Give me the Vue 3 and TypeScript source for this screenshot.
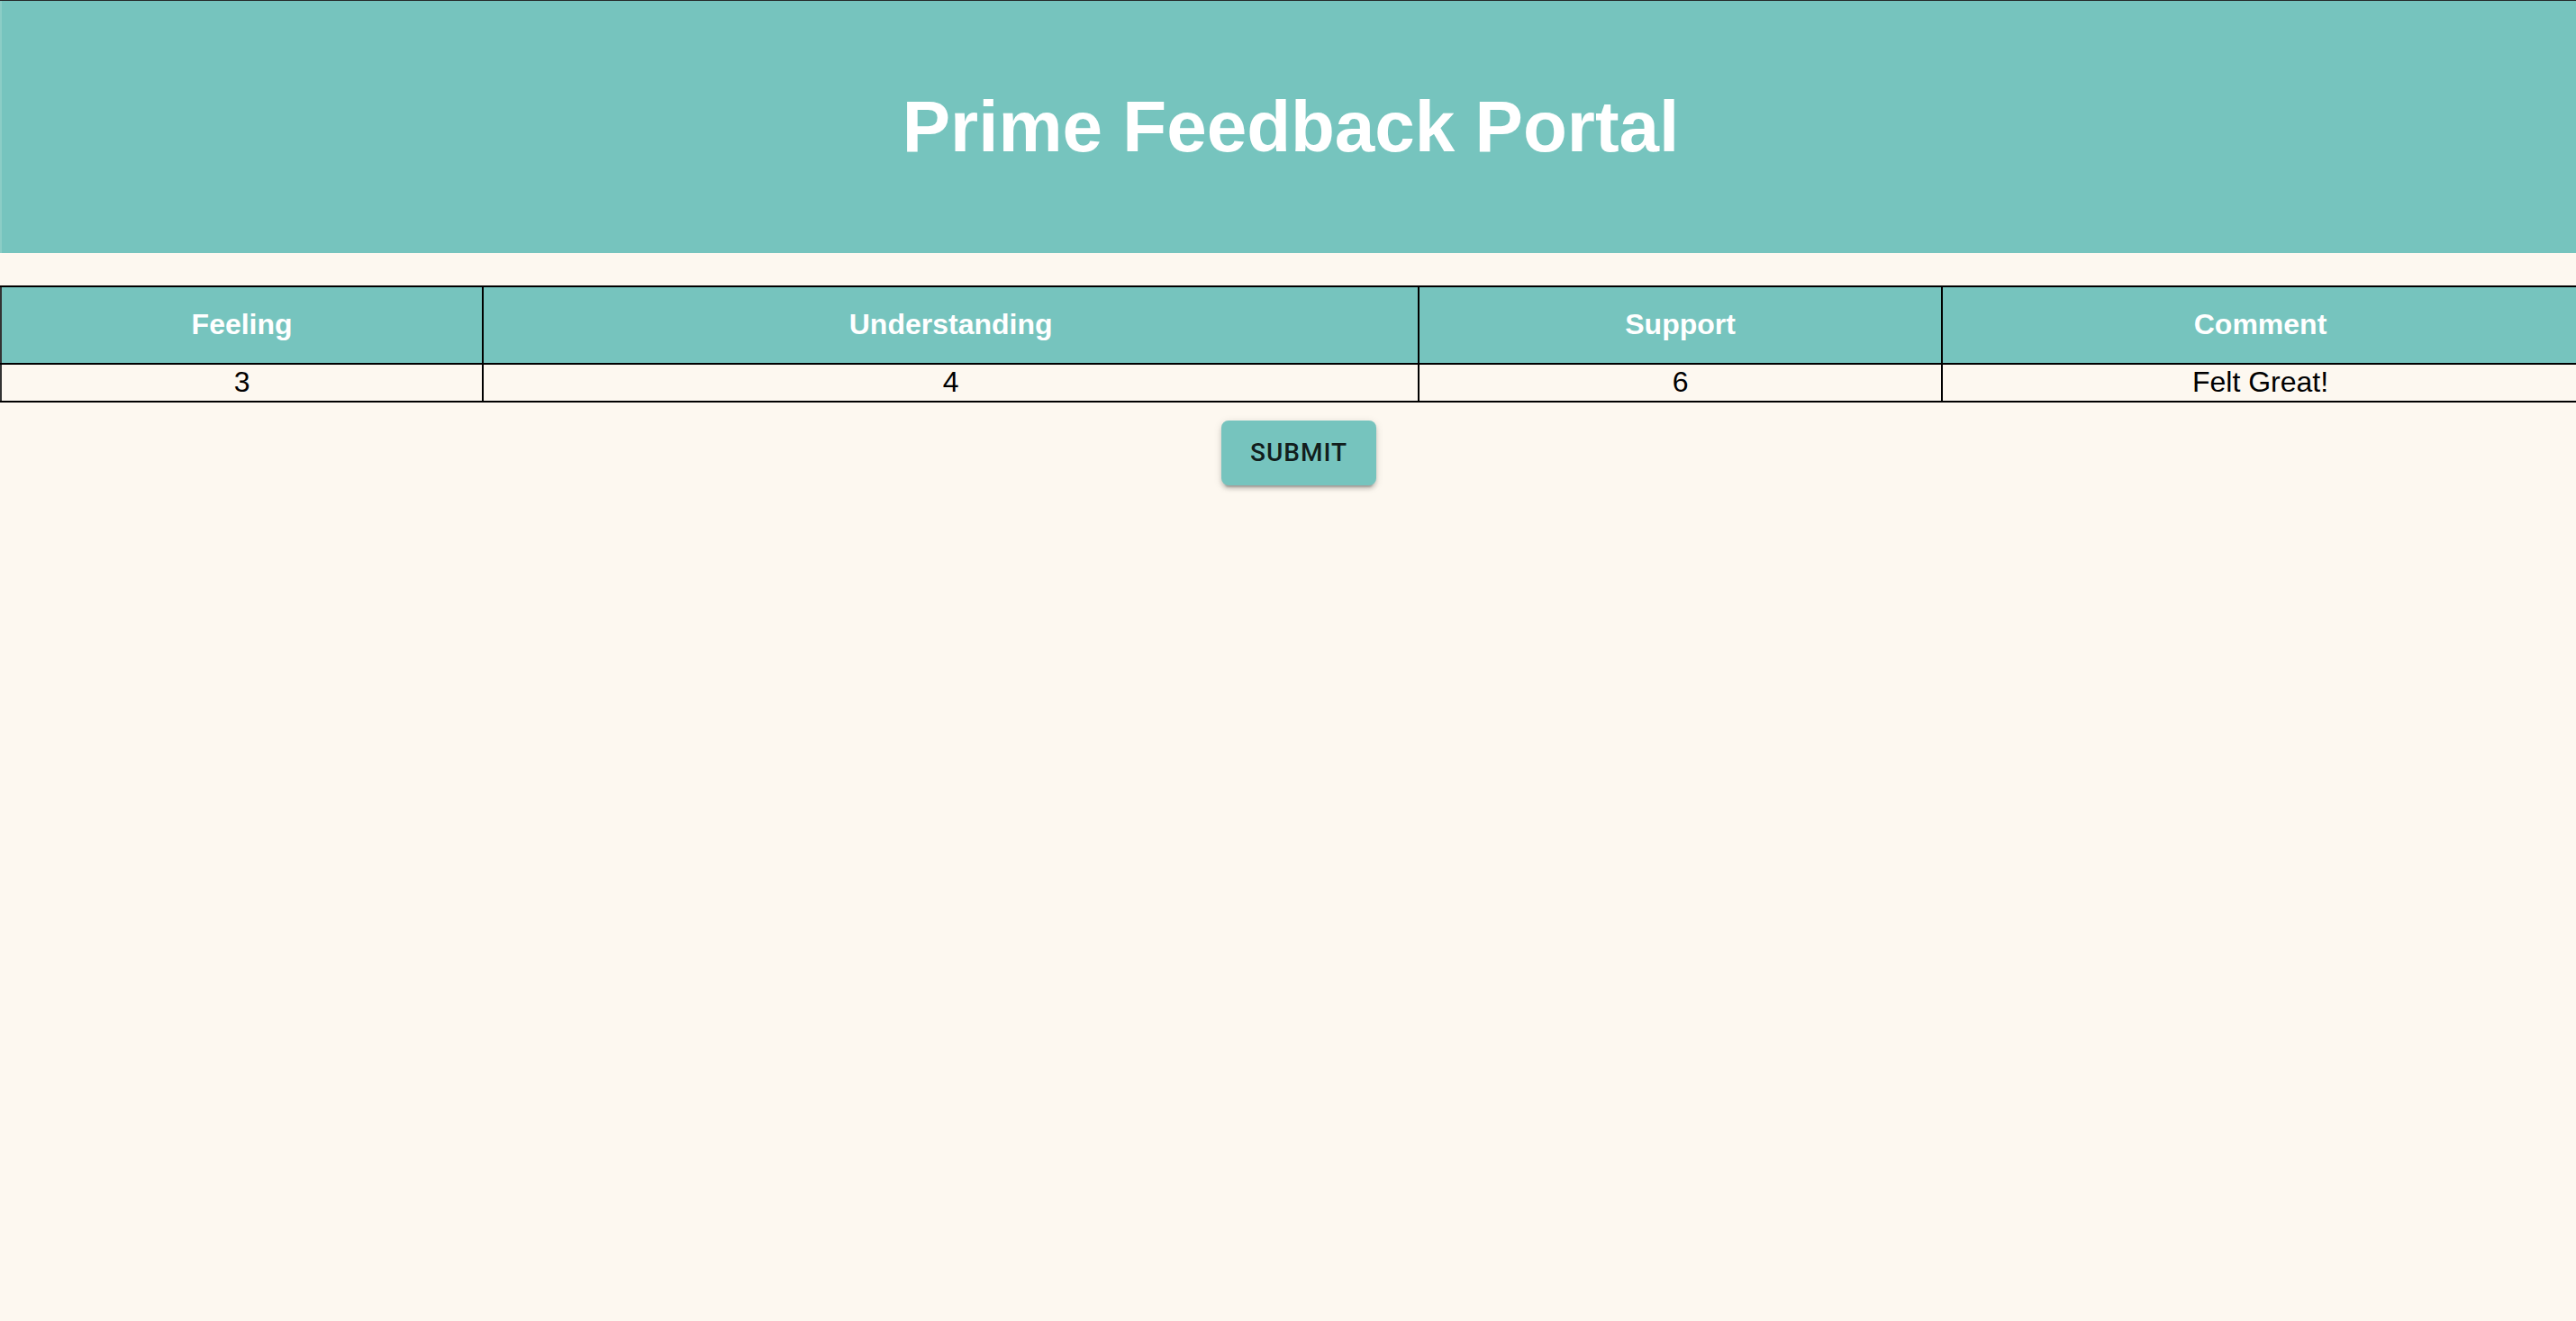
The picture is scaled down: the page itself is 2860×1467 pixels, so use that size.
<script setup lang="ts">
interface Feedback {
  id: number
  feeling: number
  understanding: number
  support: number
  comment: string
}

const feedback: Feedback[] = [
  { id: 1, feeling: 3, understanding: 4, support: 6, comment: 'Felt Great!' },
]
</script>

<template>
  <div class="app">
    <div class="page">
      <header class="banner">
        <h1>Prime Feedback Portal</h1>
      </header>
      <main>
        <table class="review">
          <colgroup>
            <col class="col-feeling" />
            <col class="col-understanding" />
            <col class="col-support" />
            <col class="col-comment" />
          </colgroup>
          <thead>
            <tr>
              <th scope="col">Feeling</th>
              <th scope="col">Understanding</th>
              <th scope="col">Support</th>
              <th scope="col">Comment</th>
            </tr>
          </thead>
          <tbody>
            <tr v-for="row in feedback" :key="row.id">
              <td>{{ row.feeling }}</td>
              <td>{{ row.understanding }}</td>
              <td>{{ row.support }}</td>
              <td>{{ row.comment }}</td>
            </tr>
          </tbody>
        </table>
        <div class="actions">
          <button type="button" class="submit">SUBMIT</button>
        </div>
      </main>
    </div>
  </div>
</template>

<style>
body {
  background: #fdf8f0;
}
</style>

<style scoped>
.app {
  overflow-x: hidden;
  border-top: 1px solid #262a2b;
  font-family: "Liberation Sans", Arial, Helvetica, sans-serif;
  font-size: 32px;
  line-height: 36px;
  color: #000;
}

/* The page runs slightly past the right edge of the window. */
.page {
  margin-right: -4px;
  padding-bottom: 20px;
}

.banner {
  padding: 94px 0;
  border-left: 2px solid #8ccdc6;
  background: #76c4be;
  color: #fff;
  text-align: center;
}

h1 {
  margin: 0;
  font-size: 80px;
  line-height: 92px;
}

.review {
  width: 100%;
  margin-top: 36px;
  border-collapse: collapse;
  table-layout: fixed;
  text-align: center;
}

.col-feeling {
  width: 18.7%;
}

.col-understanding {
  width: 36.3%;
}

.col-support {
  width: 20.3%;
}

.col-comment {
  width: 24.7%;
}

th,
td {
  border: 2px solid #000;
  padding: 1px 2px 3px;
}

th {
  padding: 23px 2px 25px;
  background: #76c4be;
  color: #fff;
}

th:first-child,
td:first-child {
  border-left-color: #333;
}

.actions {
  display: flex;
  justify-content: center;
  padding: 20px 0 0 20px;
}

.submit {
  padding: 12px 32px;
  border: 0;
  border-radius: 8px;
  background: #76c4be;
  color: rgba(0, 0, 0, 0.87);
  font-family: Roboto, "Liberation Sans", sans-serif;
  font-size: 28px;
  font-weight: 500;
  line-height: 48px;
  letter-spacing: 1px;
  cursor: pointer;
  box-shadow:
    0 6px 2px -4px rgba(0, 0, 0, 0.2),
    0 4px 4px 0 rgba(0, 0, 0, 0.14),
    0 2px 10px 0 rgba(0, 0, 0, 0.12);
}
</style>
